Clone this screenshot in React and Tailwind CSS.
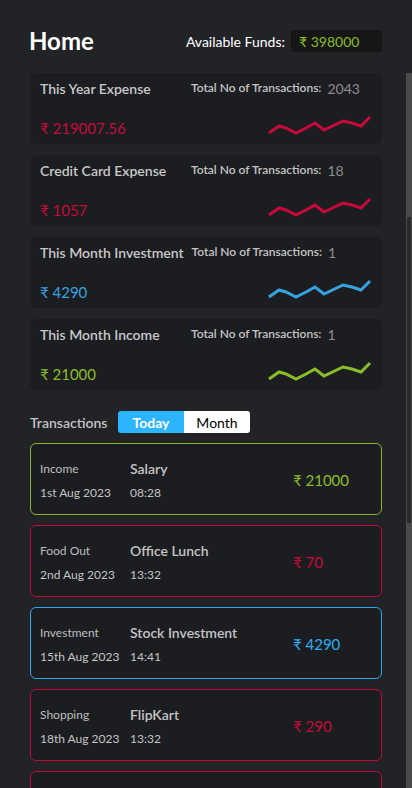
import React from "react";

const summary = [
  { title: "This Year Expense", count: "2043", amount: "₹ 219007.56", color: "text-[#c8093c]", stroke: "#c8093c" },
  { title: "Credit Card Expense", count: "18", amount: "₹ 1057", color: "text-[#c8093c]", stroke: "#c8093c" },
  { title: "This Month Investment", count: "1", amount: "₹ 4290", color: "text-[#36a3e0]", stroke: "#36a3e0" },
  { title: "This Month Income", count: "1", amount: "₹ 21000", color: "text-[#8bbd2b]", stroke: "#8bbd2b" },
];

const transactions = [
  { cat: "Income", date: "1st Aug 2023", name: "Salary", time: "08:28", amount: "₹ 21000", border: "border-[#8ab52a]", color: "text-[#8bbd2b]" },
  { cat: "Food Out", date: "2nd Aug 2023", name: "Office Lunch", time: "13:32", amount: "₹ 70", border: "border-[#c0083a]", color: "text-[#c8093c]" },
  { cat: "Investment", date: "15th Aug 2023", name: "Stock Investment", time: "14:41", amount: "₹ 4290", border: "border-[#2aa9ef]", color: "text-[#2aaef5]" },
  { cat: "Shopping", date: "18th Aug 2023", name: "FlipKart", time: "13:32", amount: "₹ 290", border: "border-[#c0083a]", color: "text-[#c8093c]" },
  { cat: "Food Out", date: "20th Aug 2023", name: "Dinner", time: "21:05", amount: "₹ 450", border: "border-[#c0083a]", color: "text-[#c8093c]" },
];

const points = "1,18 11,11 18,13 28,18 38,13 47,8 56,15 75,6 84,8 93,11 102,2";

function Spark({ stroke }) {
  return (
    <svg width="104" height="20" viewBox="0 0 104 20" className="block overflow-visible">
      <polyline points={points} fill="none" stroke={stroke} strokeWidth="3" strokeLinejoin="miter" />
    </svg>
  );
}

function SummaryCard({ item }) {
  return (
    <div className="h-[71px] rounded-[6px] bg-[#1c1d21] px-[10px] pt-[6px]">
      <div className="flex items-center h-[18px]">
        <span className="min-w-[143px] mr-[8px] text-[14px] font-semibold text-[#c9c9c9]">{item.title}</span>
        <span className="text-[12px] font-semibold text-[#c4c4c4]">Total No of Transactions:</span>
        <span className="ml-[6px] text-[14px] text-[#8e8e8e]">{item.count}</span>
      </div>
      <div className="mt-[18px] flex justify-between items-start">
        <div className={`mt-[3px] leading-[20px] text-[15px] ${item.color}`}>{item.amount}</div>
        <Spark stroke={item.stroke} />
      </div>
    </div>
  );
}

function TxCard({ t }) {
  return (
    <div className={`h-[72px] rounded-[6px] border bg-[#1c1d21] ${t.border} flex items-start pt-[15px] px-[9px]`}>
      <div className="w-[90px] flex flex-col gap-[4px]">
        <span className="leading-[20px] text-[12px] text-[#bdbdbd]">{t.cat}</span>
        <span className="leading-[20px] text-[12px] text-[#c4c4c4]">{t.date}</span>
      </div>
      <div className="w-[163px] flex flex-col gap-[4px]">
        <span className="leading-[20px] text-[14px] font-semibold text-[#c4c4c4]">{t.name}</span>
        <span className="leading-[20px] text-[12px] text-[#c4c4c4]">{t.time}</span>
      </div>
      <div className={`mt-[11px] leading-[20px] text-[15px] ${t.color}`}>{t.amount}</div>
    </div>
  );
}

export default function App() {
  return (
    <div className="h-[788px] overflow-hidden bg-[#222327] flex font-['Lato',sans-serif]">
      <div className="flex-1 pl-[30px] pr-[24px] pt-[20px]">
        <div className="h-[42px] flex items-center justify-between">
          <h1 className="-ml-[1px] text-[24px] font-bold text-white">Home</h1>
          <div className="flex items-center">
            <span className="text-[14px] text-white">Available Funds:</span>
            <div className="ml-[6px] w-[91px] h-[22px] rounded-[3px] bg-[#161616] px-[8px] flex items-center text-[14px] text-[#8bbd2b]">
              ₹ 398000
            </div>
          </div>
        </div>

        <div className="mt-[11px] flex flex-col gap-[11px]">
          {summary.map((s) => (
            <SummaryCard key={s.title} item={s} />
          ))}
        </div>

        <div className="mt-[21px] h-[22px] flex items-center">
          <span className="w-[88px] text-[14px] font-semibold text-[#c4c4c4]">Transactions</span>
          <div className="flex rounded-[3px] overflow-hidden">
            <button className="w-[66px] h-[22px] bg-[#2cb5fc] text-white text-[14px] font-bold">Today</button>
            <button className="w-[66px] h-[22px] bg-white text-black text-[14px]">Month</button>
          </div>
        </div>

        <div className="mt-[10px] flex flex-col gap-[10px]">
          {transactions.map((t, i) => (
            <TxCard key={i} t={t} />
          ))}
        </div>
      </div>

      <div className="w-[6px] pt-[73px] flex flex-col">
        <div className="flex-1 bg-[#4b4b4b] px-[1px]">
          <div className="mt-[144px] h-[306px] bg-[#2a2a2a]" />
        </div>
      </div>
    </div>
  );
}
